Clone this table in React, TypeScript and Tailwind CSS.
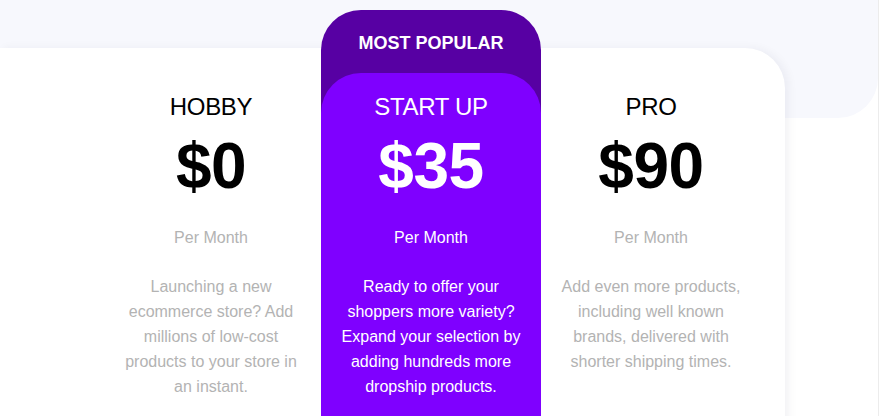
import React from 'react';

type Plan = {
  name: string;
  price: string;
  blurb: string;
  featured?: boolean;
};

const plans: Plan[] = [
  {
    name: 'HOBBY',
    price: '$0',
    blurb: 'Launching a new ecommerce store? Add millions of low-cost products to your store in an instant.',
  },
  {
    name: 'START UP',
    price: '$35',
    blurb: 'Ready to offer your shoppers more variety? Expand your selection by adding hundreds more dropship products.',
    featured: true,
  },
  {
    name: 'PRO',
    price: '$90',
    blurb: 'Add even more products, including well known brands, delivered with shorter shipping times.',
  },
];

const PlanBody: React.FC<{ plan: Plan }> = ({ plan }) => {
  const featured = !!plan.featured;
  return (
    <div className="flex flex-col items-center px-5 pt-[20px] text-center">
      <div className={`text-[24px] leading-[28px] tracking-[-0.3px] ${featured ? 'text-white' : 'text-black'}`}>{plan.name}</div>
      <div className={`mt-[13px] text-[64px] leading-[64px] font-bold tracking-[-0.5px] ${featured ? 'text-white' : 'text-black'}`}>
        {plan.price}
      </div>
      <div className={`mt-[28px] text-[16px] leading-[24px] ${featured ? 'text-white' : 'text-[#b3b3b3]'}`}>Per Month</div>
      <p className={`mt-[24px] text-[16px] leading-[25px] ${featured ? 'text-white' : 'text-[#b3b3b3]'}`}>{plan.blurb}</p>
    </div>
  );
};

export default function App() {
  return (
    <div
      className="w-[879px] h-[416px] overflow-hidden bg-white border-r border-[#ececec]"
      style={{ fontFamily: '"Liberation Sans", Arial, sans-serif' }}
    >
      {/* Backdrop band */}
      <div className="h-[118px] w-[878px] bg-[#f7f8fd] rounded-br-[40px]" />

      {/* Pricing card */}
      <div className="-mt-[70px] w-[785px] h-[400px] bg-white rounded-tr-[40px] shadow-[4px_0_10px_rgba(20,20,60,0.05)] pl-[101px]">
        <div className="flex">
          {plans.map((plan) =>
            plan.featured ? (
              <div key={plan.name} className="w-[220px] -mt-[38px] h-[420px] bg-[#5700a3] rounded-t-[40px] flex flex-col">
                <div className="h-[63px] pt-[22px] text-center text-white font-bold text-[18px] leading-[22px]">
                  MOST POPULAR
                </div>
                <div className="flex-1 bg-[#7f00ff] rounded-t-[40px]">
                  <PlanBody plan={plan} />
                </div>
              </div>
            ) : (
              <div key={plan.name} className="w-[220px] pt-[25px]">
                <PlanBody plan={plan} />
              </div>
            )
          )}
        </div>
      </div>
    </div>
  );
}
